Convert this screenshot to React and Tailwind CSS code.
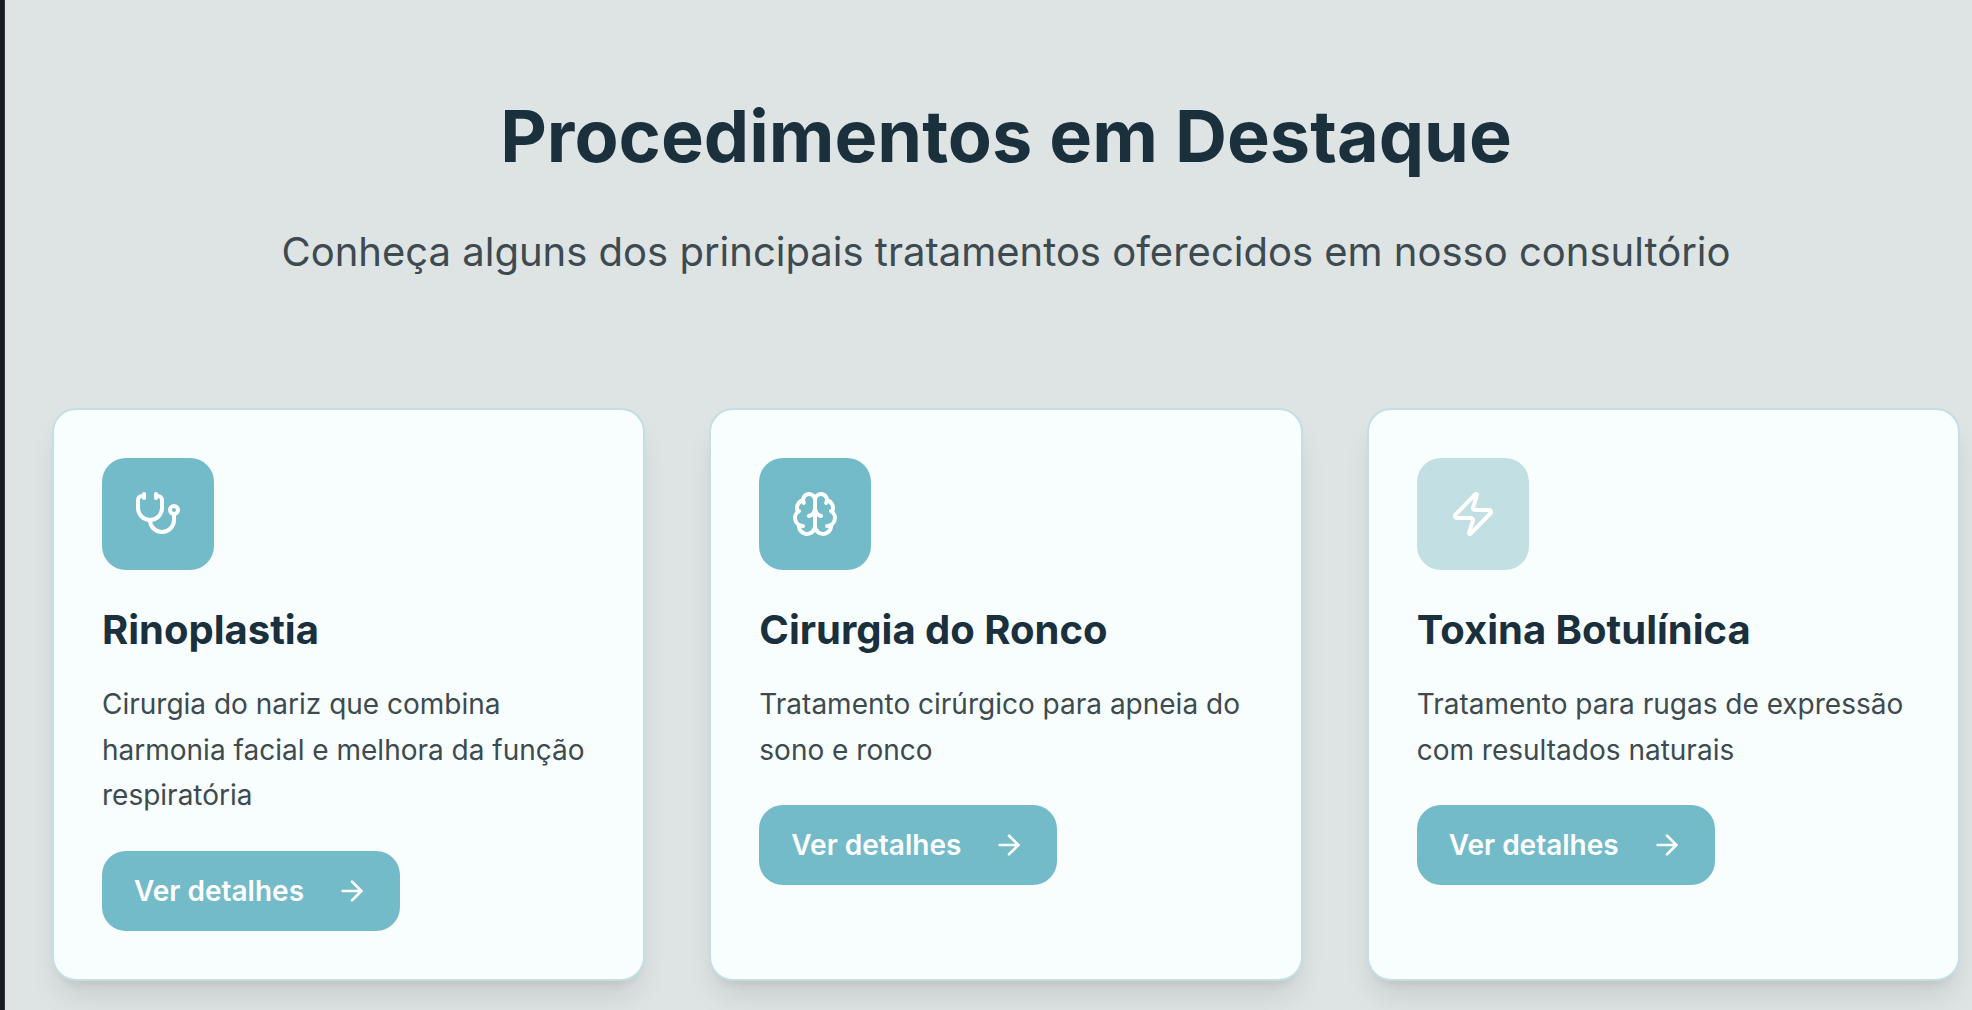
import { Stethoscope, Brain, Zap, ArrowRight } from 'lucide-react';

const procedures = [
  { title: 'Rinoplastia', text: 'Cirurgia do nariz que combina harmonia facial e melhora da função respiratória', icon: Stethoscope, tile: 'bg-[#73bbc9]' },
  { title: 'Cirurgia do Ronco', text: 'Tratamento cirúrgico para apneia do sono e ronco', icon: Brain, tile: 'bg-[#73bbc9]' },
  { title: 'Toxina Botulínica', text: 'Tratamento para rugas de expressão com resultados naturais', icon: Zap, tile: 'bg-[#c2dfe3]' },
];

function ProcedureCard({ title, text, icon: Icon, tile }) {
  return (
    <article className="rounded-3xl border-2 border-[#c2dfe3] bg-[#f8fefd] p-12 shadow-[0_20px_30px_-6px_rgba(0,0,0,0.1),0_8px_12px_-8px_rgba(0,0,0,0.1)]">
      <div className={`flex size-28 items-center justify-center rounded-3xl ${tile}`}>
        <Icon className="size-12 text-white" aria-hidden="true" />
      </div>
      <h3 className="mt-8 text-[40px] leading-14 font-bold text-[#1b303d]">{title}</h3>
      <p className="mt-6 text-[28px] leading-relaxed text-[#3d4a50]">{text}</p>
      <button type="button" className="mt-8 flex h-20 items-center gap-8 rounded-3xl bg-[#73bbc9] px-8 text-[28px] font-semibold text-white">
        Ver detalhes
        <ArrowRight className="size-8" aria-hidden="true" />
      </button>
    </article>
  );
}

export default function App() {
  return (
    <main className="min-h-screen border-l-4 border-[#191c24] bg-[#dee3e3] pt-24 pr-3 pb-7 pl-12 font-['Inter',sans-serif] shadow-[inset_1px_0_0_#33343f]">
      <header className="text-center">
        <h2 className="text-7xl leading-20 font-bold text-[#1b303d]">Procedimentos em Destaque</h2>
        <p className="mt-11 text-[40px] leading-16 text-[#3d4a50]">Conheça alguns dos principais tratamentos oferecidos em nosso consultório</p>
      </header>
      <section className="mt-31 grid grid-cols-3 gap-16">
        {procedures.map((item) => <ProcedureCard key={item.title} {...item} />)}
      </section>
    </main>
  );
}
